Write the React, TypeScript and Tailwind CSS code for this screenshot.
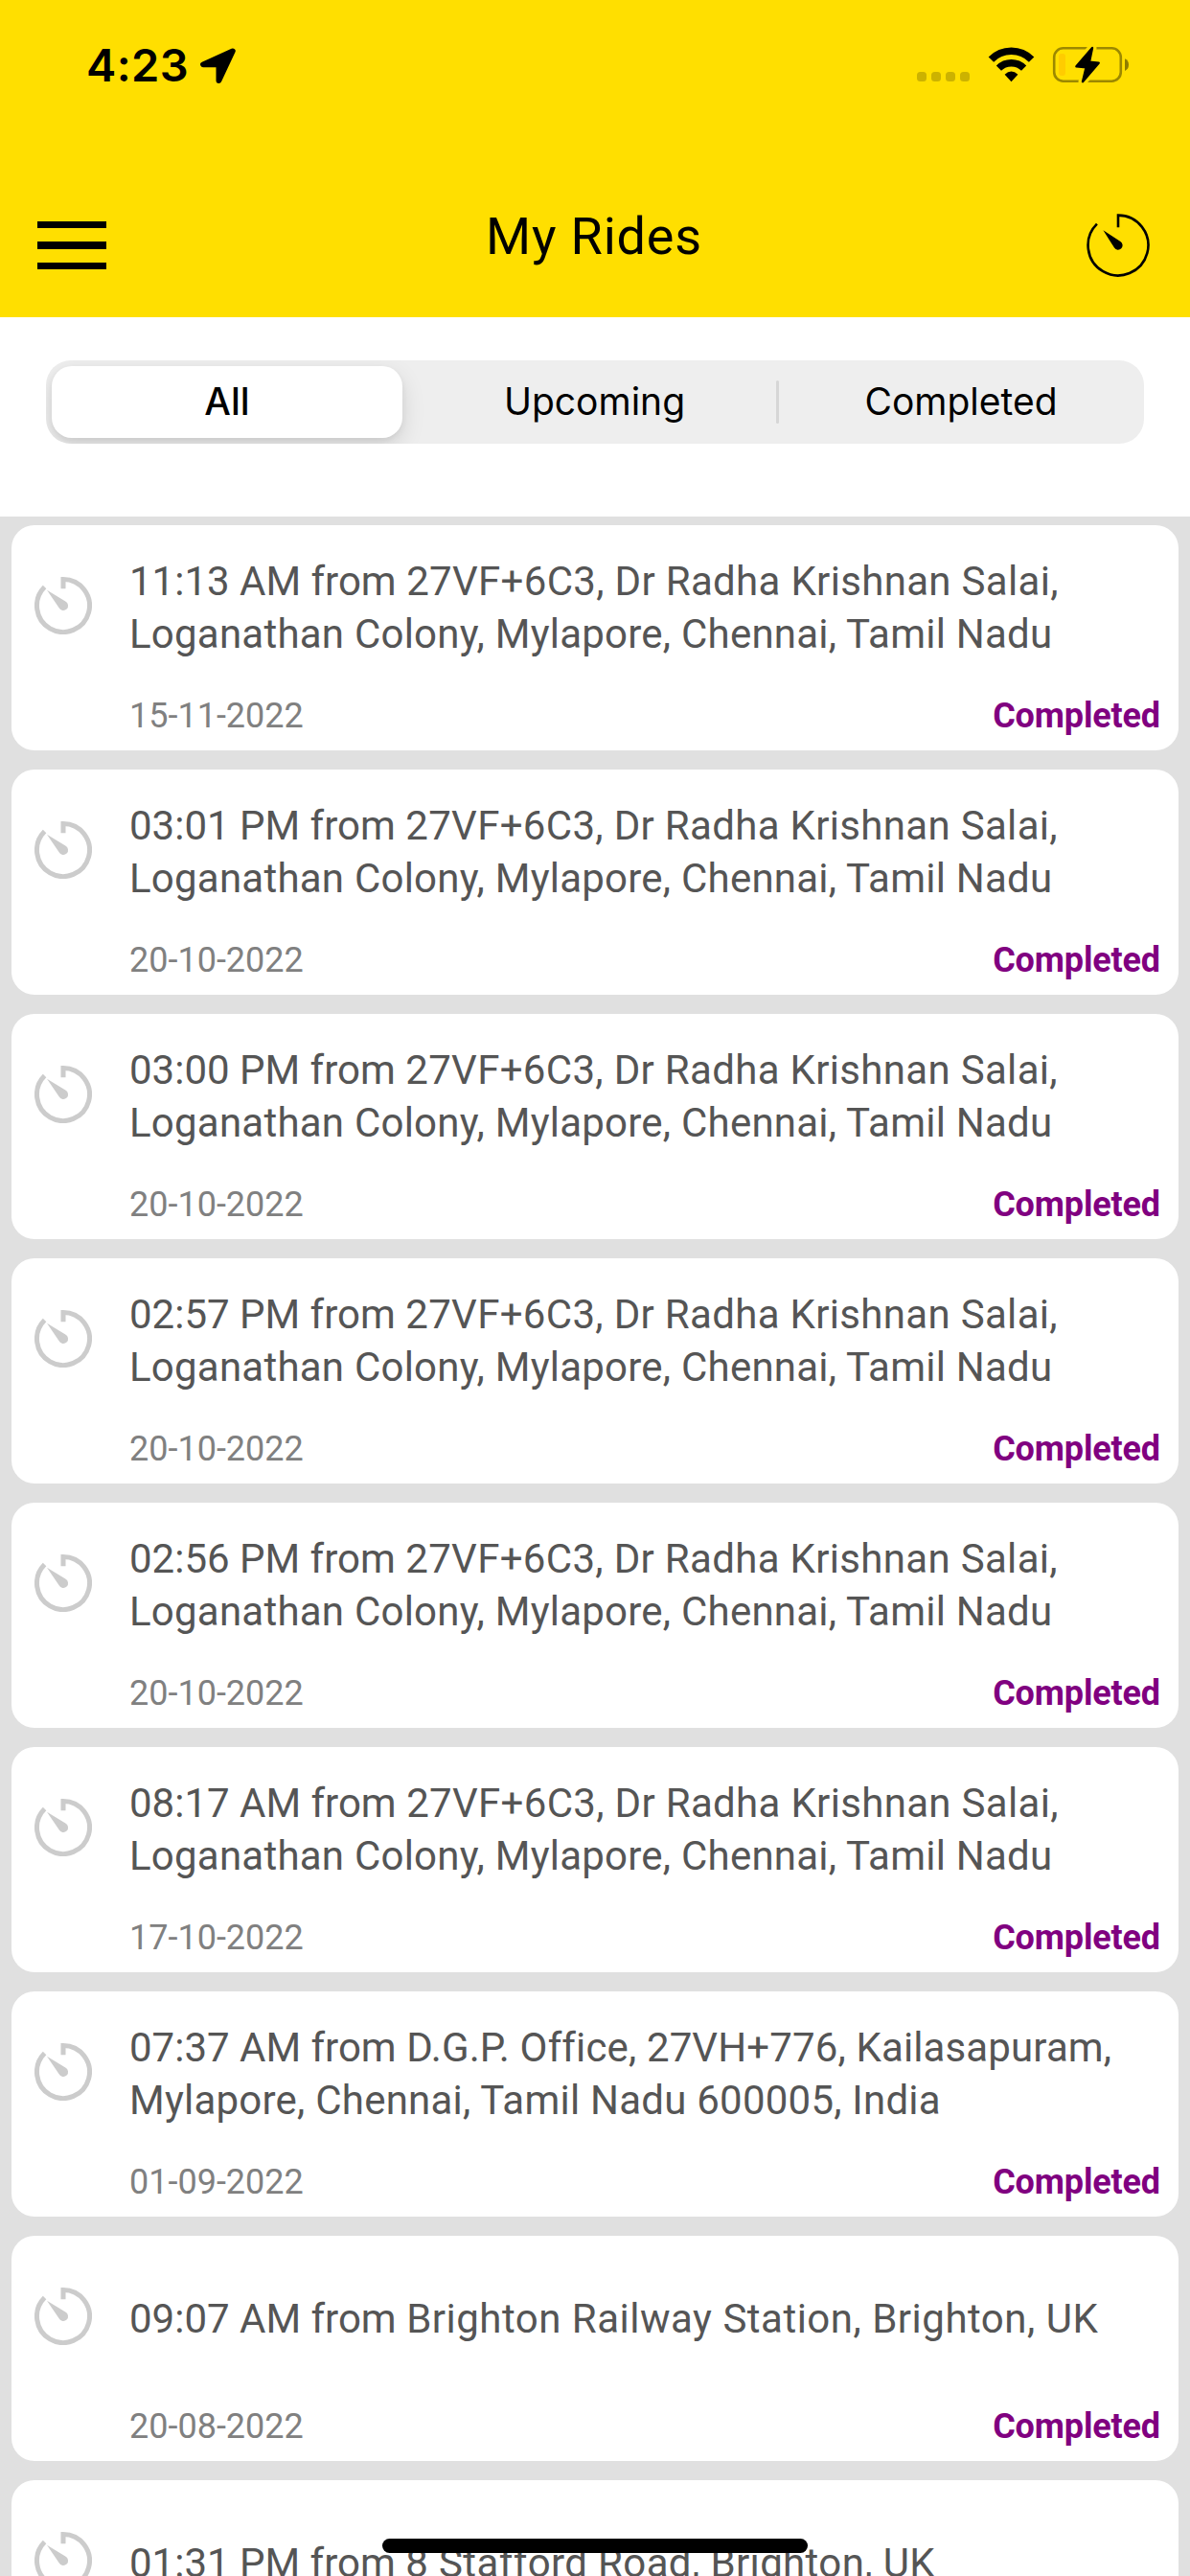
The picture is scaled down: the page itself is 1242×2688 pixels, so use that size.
import React from 'react';

interface Ride {
  time: string;
  pickup: string;
  pickupRest?: string;
  tracking?: string;
  date?: string;
  status?: string;
}

const SALAI = '27VF+6C3, Dr Radha Krishnan Salai,';
const MYLAPORE = 'Loganathan Colony, Mylapore, Chennai, Tamil Nadu';

const RIDES: Ride[] = [
  { time: '11:13 AM', pickup: SALAI, pickupRest: MYLAPORE, date: '15-11-2022', status: 'Completed' },
  { time: '03:01 PM', pickup: SALAI, pickupRest: MYLAPORE, date: '20-10-2022', status: 'Completed' },
  { time: '03:00 PM', pickup: SALAI, pickupRest: MYLAPORE, date: '20-10-2022', status: 'Completed' },
  { time: '02:57 PM', pickup: SALAI, pickupRest: MYLAPORE, date: '20-10-2022', status: 'Completed' },
  { time: '02:56 PM', pickup: SALAI, pickupRest: MYLAPORE, date: '20-10-2022', status: 'Completed' },
  { time: '08:17 AM', pickup: SALAI, pickupRest: MYLAPORE, date: '17-10-2022', status: 'Completed' },
  {
    time: '07:37 AM',
    pickup: 'D.G.P. Office, 27VH+776, Kailasapuram,',
    pickupRest: 'Mylapore, Chennai, Tamil Nadu 600005, India',
    tracking: 'tracking-[0.13px]',
    date: '01-09-2022',
    status: 'Completed',
  },
  {
    time: '09:07 AM',
    pickup: 'Brighton Railway Station, Brighton, UK',
    tracking: 'tracking-[0.5px]',
    date: '20-08-2022',
    status: 'Completed',
  },
  { time: '01:31 PM', pickup: '8 Stafford Road, Brighton, UK', tracking: 'tracking-[0.38px]' },
];

function TimerIcon({ className }: { className?: string }) {
  return (
    <svg viewBox="0 0 60 60" className={className} fill="none">
      <path d="M30 12.3V2.5A27.5 27.5 0 1 1 10.55 10.55" stroke="currentColor" strokeWidth="5" />
      <path d="M13 13.7L32.3 25.6A5 5 0 1 1 25.6 32.3Z" fill="currentColor" />
    </svg>
  );
}

function ThinTimerIcon({ className }: { className?: string }) {
  return (
    <svg viewBox="0 0 68 68" className={className} fill="none">
      <path d="M34 15.2V2.6A31.4 31.4 0 1 1 11.9 11.7" stroke="currentColor" strokeWidth="2.6" />
      <path d="M18.4 18.2L36.4 30A4.7 4.7 0 1 1 30 36.6Z" fill="currentColor" />
    </svg>
  );
}

function StatusBar() {
  return (
    <div className="flex h-[136px] items-start justify-between pl-[90px] pr-[63px] pt-[43px] text-black">
      <div className="flex items-start">
        <span className="w-[116px] font-['Inter',sans-serif] text-[47px] leading-[50px] font-semibold tracking-[0.4px]">
          4:23
        </span>
        <svg viewBox="206 47 44 44" className="mt-1 h-[44px] w-[44px]">
          <path
            d="M242.8 53.3L212 67.3H228.4V84Z"
            stroke="currentColor"
            strokeWidth="5.8"
            strokeLinejoin="round"
            fill="currentColor"
          />
        </svg>
      </div>
      <div className="flex items-start pt-1">
        <div className="mt-[28px] flex gap-[5px]">
          {[0, 1, 2, 3].map(dot => (
            <span key={dot} className="h-[10px] w-[10px] rounded-[3.5px] bg-[#ccb200]" />
          ))}
        </div>
        <svg viewBox="1030 47 52 40" className="ml-[18px] h-[40px] w-[52px]" fill="none">
          <path d="M1034.4 62.2A29.5 29.5 0 0 1 1076.6 62.2" stroke="currentColor" strokeWidth="7.6" />
          <path d="M1042.4 71.2A18.6 18.6 0 0 1 1068.6 71.2" stroke="currentColor" strokeWidth="7.4" />
          <path d="M1048.6 77.8Q1055.5 71.2 1062.4 77.8L1055.5 85.2Z" fill="currentColor" />
        </svg>
        <svg viewBox="1097 47 82 42" className="ml-[15px] h-[42px] w-[82px]" fill="none">
          <rect x="1100.2" y="50.3" width="69.6" height="34.4" rx="9.5" stroke="#9c8800" strokeWidth="2.6" />
          <rect x="1105" y="56" width="7" height="23" rx="3" fill="#ffcc00" />
          <path d="M1174 61.2Q1178 63 1178 67.6T1174 74Z" fill="#8f7d00" />
          <path
            d="M1140 50L1123.4 69.4L1133.6 70.4L1130 85.2L1146.7 65.6L1137 64.6Z"
            stroke="#ffdf00"
            strokeWidth="9"
            strokeLinejoin="round"
          />
          <path
            d="M1140 50L1123.4 69.4L1133.6 70.4L1130 85.2L1146.7 65.6L1137 64.6Z"
            stroke="currentColor"
            strokeWidth="2.4"
            strokeLinejoin="round"
            fill="currentColor"
          />
        </svg>
      </div>
    </div>
  );
}

function Header() {
  return (
    <header className="h-[331px] shrink-0 bg-[#ffdf00]">
      <StatusBar />
      <div className="flex h-[195px] items-start justify-between pl-[39px] pr-[41px] text-black">
        <button className="mt-[94.5px] flex w-[72px] flex-col gap-[14px]">
          <span className="h-[7.5px] w-full bg-black" />
          <span className="h-[7.5px] w-full bg-black" />
          <span className="h-[7.5px] w-full bg-black" />
        </button>
        <h1 className="mt-[79px] mr-[4px] text-[54px] leading-[64px] tracking-[0.8px]">My Rides</h1>
        <ThinTimerIcon className="mt-[86px] h-[68px] w-[68px]" />
      </div>
    </header>
  );
}

function Tabs() {
  return (
    <div className="h-[208px] shrink-0 bg-white px-[48px] pt-[45px]">
      <div className="flex h-[87px] items-center overflow-hidden rounded-[26px] bg-[#eeeeee] px-[6px] font-['Inter',sans-serif] text-[39px] leading-[46px] text-black">
        <button className="h-[75px] w-[366px] rounded-[21px] bg-white pb-[2px] font-medium shadow-[0_9px_24px_rgba(0,0,0,0.12),0_3px_6px_rgba(0,0,0,0.06)]">
          All
        </button>
        <button className="h-[75px] flex-1 pb-[2px] pl-[11px]">Upcoming</button>
        <span className="h-[45px] w-[3px] rounded-full bg-[#d6d6d6]" />
        <button className="h-[75px] w-[375px] pb-[2px] pl-[5px]">Completed</button>
      </div>
    </div>
  );
}

function RideCard({ ride }: { ride: Ride }) {
  return (
    <div className="flex h-[235px] shrink-0 items-start rounded-[24px] bg-white pl-[24px] pr-[19px]">
      <TimerIcon className="mt-[54px] h-[60px] w-[60px] shrink-0 text-[#cccccc]" />
      <div className="ml-[39px] flex-1">
        <div className="mt-[31px] flex h-[110px] items-center">
          <p className="text-[42px] leading-[55px] whitespace-nowrap text-[#555555]">
            {ride.time} from <span className={ride.tracking ?? 'tracking-[0.32px]'}>{ride.pickup}</span>
            {ride.pickupRest && <span className="block tracking-[0.23px]">{ride.pickupRest}</span>}
          </p>
        </div>
        {ride.date && (
          <div className="mt-[36px] flex justify-between text-[36px] leading-[44px]">
            <span className="text-[#808080]">{ride.date}</span>
            <span className="font-bold tracking-[-0.15px] text-[#800080]">{ride.status}</span>
          </div>
        )}
      </div>
    </div>
  );
}

export default function App() {
  return (
    <div className="relative flex h-[2688px] w-[1242px] flex-col overflow-hidden bg-[#e0e0e0] font-['Roboto',sans-serif]">
      <Header />
      <Tabs />
      <main className="flex flex-col gap-[20px] px-[12px] pt-[9px]">
        {RIDES.map(ride => (
          <RideCard key={ride.time} ride={ride} />
        ))}
      </main>
      {/* home indicator */}
      <div className="absolute bottom-[24px] left-[399px] h-[15px] w-[444px] rounded-full bg-black" />
    </div>
  );
}
